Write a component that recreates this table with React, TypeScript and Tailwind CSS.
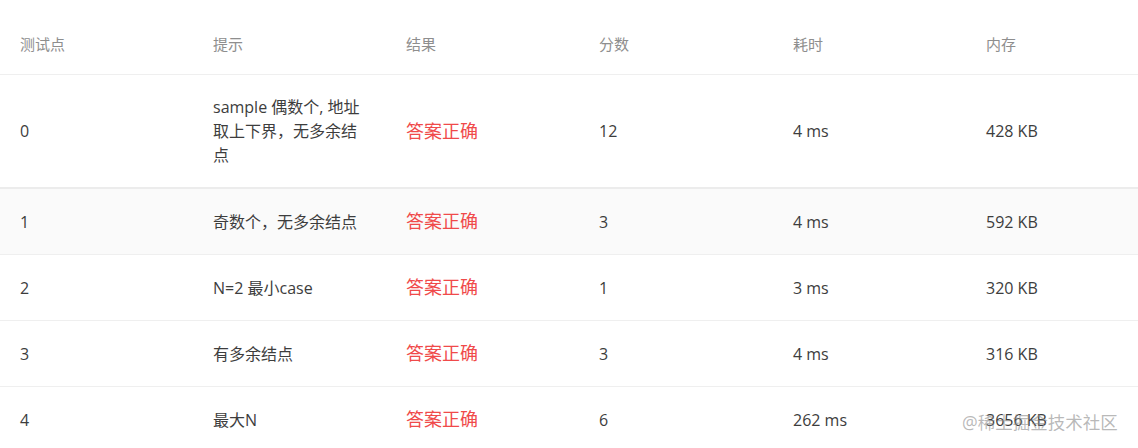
import React from "react";

type Row = {
  id: string;
  hint: string;
  score: string;
  time: string;
  memory: string;
};

const rows: Row[] = [
  { id: "0", hint: "sample 偶数个, 地址取上下界，无多余结点", score: "12", time: "4 ms", memory: "428 KB" },
  { id: "1", hint: "奇数个，无多余结点", score: "3", time: "4 ms", memory: "592 KB" },
  { id: "2", hint: "N=2 最小case", score: "1", time: "3 ms", memory: "320 KB" },
  { id: "3", hint: "有多余结点", score: "3", time: "4 ms", memory: "316 KB" },
  { id: "4", hint: "最大N", score: "6", time: "262 ms", memory: "3656 KB" },
];

const headers = ["测试点", "提示", "结果", "分数", "耗时", "内存"];

const grid = "grid grid-cols-[193px_193px_193px_194px_193px_1fr]";

export default function App() {
  return (
    <div
      className="relative h-[448px] w-[1138px] overflow-hidden bg-white"
      style={{ fontFamily: '"Open Sans", "Noto Sans CJK SC", sans-serif' }}
    >
      {/* Header */}
      <div className={`${grid} border-b border-[#efefef]`}>
        {headers.map((h) => (
          <div
            key={h}
            className="px-5 pt-[33px] pb-[19px] text-[15px] leading-[22px] text-[#8e8e8e]"
          >
            {h}
          </div>
        ))}
      </div>

      {/* Body */}
      {rows.map((r, i) => (
        <div
          key={r.id}
          className={`${grid} items-center ${
            i === 0 ? "border-b-2 border-[#ececec]" : "border-b border-[#efefef]"
          } ${i === 1 ? "bg-[#fafafa]" : ""}`}
        >
          <div className="px-5 py-5 text-[16px] leading-[24px] text-[#3d3d3d]">{r.id}</div>
          <div className="px-5 py-5 text-[16px] leading-[24px] text-[#3d3d3d]">{r.hint}</div>
          <div className="px-5 py-5 text-[18px] leading-[25px] text-[#f04a4a]">答案正确</div>
          <div className="px-5 py-5 text-[16px] leading-[24px] text-[#3d3d3d]">{r.score}</div>
          <div className="px-5 py-5 text-[16px] leading-[24px] text-[#3d3d3d]">{r.time}</div>
          <div className="px-5 py-5 text-[16px] leading-[24px] text-[#3d3d3d]">{r.memory}</div>
        </div>
      ))}

      {/* Watermark */}
      <div className="pointer-events-none absolute left-[962px] top-[410px] text-[17.5px] leading-[24px] text-[#8a8a8a]/60">
        @稀土掘金技术社区
      </div>
    </div>
  );
}
